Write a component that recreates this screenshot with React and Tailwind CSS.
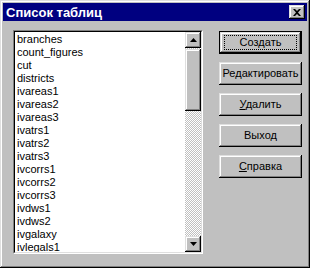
const tables = [
  "branches",
  "count_figures",
  "cut",
  "districts",
  "ivareas1",
  "ivareas2",
  "ivareas3",
  "ivatrs1",
  "ivatrs2",
  "ivatrs3",
  "ivcorrs1",
  "ivcorrs2",
  "ivcorrs3",
  "ivdws1",
  "ivdws2",
  "ivgalaxy",
  "ivlegals1",
];

const raised =
  "shadow-[inset_-1px_-1px_0_#000,inset_1px_1px_0_#dfdfdf,inset_-2px_-2px_0_#808080,inset_2px_2px_0_#fff]";

function Arrow({ down }) {
  return (
    <svg width="7" height="4" viewBox="0 0 7 4" className="block">
      {down ? (
        <path d="M0 0h7L3.5 4z" fill="#000" />
      ) : (
        <path d="M0 4h7L3.5 0z" fill="#000" />
      )}
    </svg>
  );
}

function Button({ children, isDefault }) {
  if (isDefault) {
    return (
      <div className="h-[23px] w-[83px] border border-black">
        <div
          className={`flex h-full w-full items-center justify-center bg-[#c0c0c0] ${raised}`}
        >
          <div className="flex h-[15px] w-[73px] items-center justify-center border border-dotted border-black">
            {children}
          </div>
        </div>
      </div>
    );
  }
  return (
    <div
      className={`flex h-[23px] w-[83px] items-center justify-center bg-[#c0c0c0] ${raised}`}
    >
      {children}
    </div>
  );
}

export default function App() {
  return (
    <div
      className="h-[268px] w-[310px] bg-[#c0c0c0] p-[3px] text-[11px] leading-[13px] text-black shadow-[inset_-1px_-1px_0_#000,inset_1px_1px_0_#dfdfdf,inset_-2px_-2px_0_#808080,inset_2px_2px_0_#fff]"
      style={{ fontFamily: '"Liberation Sans", Arial, sans-serif' }}
    >
      {/* title bar */}
      <div className="flex h-[18px] items-center justify-between bg-[#000080] pl-[3px] pr-[2px]">
        <span className="text-[13px] font-bold leading-none text-white">
          Список таблиц
        </span>
        <div
          className={`flex h-[14px] w-[16px] items-center justify-center bg-[#c0c0c0] ${raised}`}
        >
          <svg width="8" height="7" viewBox="0 0 8 7" className="block">
            <path
              d="M0 0h2l2 2 2-2h2L5 3.5 8 7H6L4 5 2 7H0l3-3.5z"
              fill="#000"
            />
          </svg>
        </div>
      </div>

      <div className="flex pl-[10px] pt-[9px]">
        {/* list box */}
        <div className="h-[224px] w-[190px] border border-b-white border-l-[#808080] border-r-white border-t-[#808080]">
          <div className="flex h-full w-full border border-b-[#dfdfdf] border-l-black border-r-[#dfdfdf] border-t-black bg-white">
            <div className="flex-1 overflow-hidden pl-[2px] pt-[1px]">
              {tables.map((t) => (
                <div key={t} className="h-[13px] whitespace-nowrap">
                  {t}
                </div>
              ))}
            </div>
            <div className="flex w-[16px] flex-col bg-[conic-gradient(#fff_25%,#c0c0c0_0_50%,#fff_0_75%,#c0c0c0_0)] bg-[length:2px_2px]">
              <div
                className={`flex h-[16px] items-center justify-center bg-[#c0c0c0] ${raised}`}
              >
                <Arrow />
              </div>
              <div className={`mt-[1px] h-[62px] bg-[#c0c0c0] ${raised}`} />
              <div className="flex-1" />
              <div
                className={`flex h-[16px] items-center justify-center bg-[#c0c0c0] ${raised}`}
              >
                <Arrow down />
              </div>
            </div>
          </div>
        </div>

        {/* buttons */}
        <div className="ml-[16px] flex flex-col gap-[8px] pt-[1px]">
          <Button isDefault>Создать</Button>
          <Button>Редактировать</Button>
          <Button>
            <span>
              <span className="underline">У</span>далить
            </span>
          </Button>
          <Button>Выход</Button>
          <Button>
            <span>
              <span className="underline">С</span>правка
            </span>
          </Button>
        </div>
      </div>
    </div>
  );
}
